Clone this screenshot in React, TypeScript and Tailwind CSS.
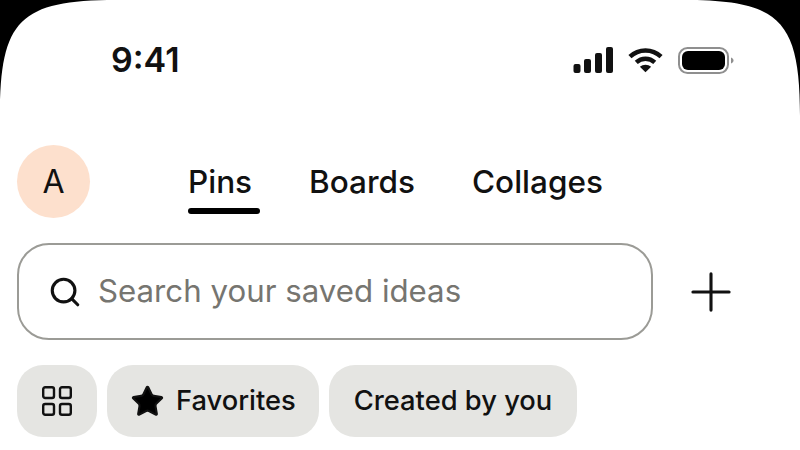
import { Search, Plus, Star } from 'lucide-react'

function SignalIcon() {
  return (
    <svg width="40" height="26" viewBox="0 0 40 26" fill="currentColor">
      <rect x="0.500" y="17" width="7" height="9" rx="2" />
      <rect x="11" y="12" width="7" height="14" rx="2" />
      <rect x="22" y="6" width="7" height="20" rx="2" />
      <rect x="33" y="0" width="7" height="26" rx="2" />
    </svg>
  )
}

function WifiIcon() {
  return (
    <svg width="35" height="26" viewBox="0 0 36 26" fill="none" stroke="currentColor" strokeWidth="4.600">
      <path d="M2 9.500C11 1 25 1 34 9.500" />
      <path d="M8.500 15.500C14 10.500 22 10.500 27.500 15.500" />
      <path d="M18 25.500L12.200 20C15.500 17.200 20.500 17.200 23.800 20Z" fill="currentColor" stroke="none" />
    </svg>
  )
}

function BatteryIcon() {
  return (
    <svg width="57" height="27" viewBox="0 0 57 27" fill="none">
      <rect x="1" y="1" width="49" height="25" rx="8.500" stroke="#8f8f8f" strokeWidth="2" />
      <rect x="4" y="4" width="43" height="19" rx="6" fill="#000" />
      <path d="M53 10.500v6c1.500-.5 2.500-1.700 2.500-3s-1-2.500-2.500-3z" fill="#8f8f8f" />
    </svg>
  )
}

function GridIcon() {
  return (
    <svg width="30" height="30" viewBox="0 0 30 30" fill="none" stroke="#111" strokeWidth="2.400">
      <rect x="1.200" y="1.200" width="10.800" height="10.800" rx="2" />
      <rect x="18" y="1.200" width="10.800" height="10.800" rx="2" />
      <rect x="1.200" y="18" width="10.800" height="10.800" rx="2" />
      <rect x="18" y="18" width="10.800" height="10.800" rx="2" />
    </svg>
  )
}

// the screen corners are a squircle, a plain border radius is too round
function Corner({ className }: { className: string }) {
  return (
    <svg width="116" height="116" viewBox="0 0 116 116" className={className}>
      <path d="M0 0H116C20 0 0 20 0 116Z" fill="#000" />
    </svg>
  )
}

export default function App() {
  return (
    <div className="relative w-[800px] h-[450px] bg-white overflow-hidden font-['Inter',sans-serif] text-[#111]">
      <Corner className="absolute left-0 top-0" />
      <Corner className="absolute right-0 top-0 -scale-x-100" />

      {/* Status bar */}
      <div className="h-[145px] flex items-start justify-between pt-[40px] pl-[111px] pr-[65px]">
        <span className="text-[34px] leading-[40px] font-semibold">9:41</span>
        <div className="flex items-center gap-[15px] h-[40px]">
          <SignalIcon />
          <WifiIcon />
          <BatteryIcon />
        </div>
      </div>

      {/* Tabs */}
      <div className="flex items-center pl-[17px] h-[73px]">
        <div className="w-[73px] h-[73px] rounded-full bg-[#fde0cd] flex items-center justify-center text-[32px]">
          A
        </div>
        <div className="flex gap-[57px] ml-[98px] text-[31.500px] leading-[40px] font-medium">
          <div className="relative">
            Pins
            <div className="absolute left-0 top-[46px] w-[72px] h-[6px] rounded-full bg-black" />
          </div>
          <div>Boards</div>
          <div>Collages</div>
        </div>
      </div>

      {/* Search */}
      <div className="flex items-center pl-[17px] mt-[25px]">
        <div className="w-[636px] h-[97px] rounded-[32px] border-2 border-[#9b9b96] flex items-center pl-[29px] gap-[16px]">
          <Search size={34} strokeWidth={2.200} />
          <span className="text-[31.250px] text-[#767570]">Search your saved ideas</span>
        </div>
        <Plus size={62} strokeWidth={1.200} className="ml-[27px]" />
      </div>

      {/* Filters */}
      <div className="flex gap-[10px] pl-[17px] mt-[25px] text-[27.300px] font-medium">
        <div className="w-[80px] h-[72px] rounded-[26px] bg-[#e5e5e2] flex items-center justify-center">
          <GridIcon />
        </div>
        <div className="w-[212px] h-[72px] rounded-[26px] bg-[#e5e5e2] flex items-center pl-[23px] gap-[11px]">
          <Star size={35} fill="#000" strokeWidth={1.500} />
          Favorites
        </div>
        <div className="w-[248px] h-[72px] rounded-[26px] bg-[#e5e5e2] flex items-center justify-center">
          Created by you
        </div>
      </div>
    </div>
  )
}
